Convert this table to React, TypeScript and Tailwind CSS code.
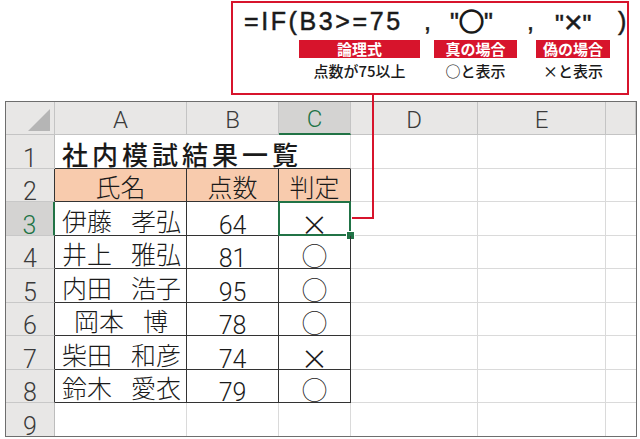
import React from 'react';

const people = [
  { first: '伊藤', last: '孝弘', score: '64', mark: '×' },
  { first: '井上', last: '雅弘', score: '81', mark: '○' },
  { first: '内田', last: '浩子', score: '95', mark: '○' },
  { first: '岡本', last: '博', score: '78', mark: '○', indent: true },
  { first: '柴田', last: '和彦', score: '74', mark: '×' },
  { first: '鈴木', last: '愛衣', score: '79', mark: '○' },
];

const letters = ['A', 'B', 'C', 'D', 'E', ''];

function ColHead({ label, active }: { label: string; active?: boolean }) {
  if (active) {
    return (
      <div className="flex items-center justify-center pt-[3px] bg-[#d4d3d2] border-r border-r-[#c4c4c4] border-b-2 border-b-[#217346] text-[24px] leading-none text-[#217346] font-['Roboto',sans-serif] font-light">
        {label}
      </div>
    );
  }
  return (
    <div className="flex items-center justify-center pt-[3px] bg-[#e8e7e6] border-r border-b border-[#c4c4c4] text-[24px] leading-none text-[#3a3a3a] font-['Roboto',sans-serif] font-light">
      {label}
    </div>
  );
}

function RowHead({ n }: { n: number }) {
  if (n === 3) {
    return (
      <div className="flex items-center justify-center pt-[13px] bg-[#d4d3d2] border-b border-b-[#c8c8c8] border-r-2 border-r-[#217346] text-[25px] leading-none text-[#217346] font-['Roboto',sans-serif] font-light">
        {n}
      </div>
    );
  }
  const inTable = n >= 2 && n <= 8;
  return (
    <div
      className={
        inTable
          ? "flex items-center justify-center pt-[13px] bg-[#e8e7e6] border-b border-b-[#c8c8c8] border-r border-r-[#333] text-[25px] leading-none text-[#3a3a3a] font-['Roboto',sans-serif] font-light"
          : "flex items-center justify-center pt-[13px] bg-[#e8e7e6] border-b border-b-[#c8c8c8] border-r border-r-[#bdbdbd] text-[25px] leading-none text-[#3a3a3a] font-['Roboto',sans-serif] font-light"
      }
    >
      {n}
    </div>
  );
}

function Blank({ last }: { last?: boolean }) {
  return <div className={last ? 'border-b border-[#dadada]' : 'border-r border-b border-[#dadada]'} />;
}

function Blank9({ last }: { last?: boolean }) {
  return <div className={last ? '' : 'border-r border-[#dadada]'} />;
}

export default function App() {
  return (
    <div className="relative w-[640px] h-[439px] overflow-hidden bg-white text-[#1a1a1a]">
      {/* formula callout */}
      <div className="ml-[231px] pt-[1px]">
        <div className="box-border w-[398px] h-[94px] border-2 border-[#d7142c] pl-[11px] font-['Liberation_Sans','Noto_Sans_CJK_JP',sans-serif]">
          <div className="mt-[6px] flex h-[25px] items-center whitespace-nowrap text-[25px] leading-none [-webkit-text-stroke:0.5px_#1a1a1a]">
            <span className="w-[170px] tracking-[2.6px]">=IF(B3&gt;=75</span>
            <span className="w-[30px] pl-[10px]">,</span>
            <span className="w-[61px] pl-[6px]">
              "<span className="font-['Noto_Sans_CJK_JP',sans-serif] text-[25px] [-webkit-text-stroke:1.6px_#1a1a1a]">○</span>"
            </span>
            <span className="w-[45px] pl-[22px]">,</span>
            <span className="w-[62px] pl-[5px]">
              "<span className="text-[32px]">×</span>"
            </span>
            <span className="pl-[6px]">)</span>
          </div>
          <div className="mt-[6px] ml-[55px] flex font-['Noto_Sans_CJK_JP',sans-serif]">
            <div className="flex w-[121px] flex-col items-center">
              <div className="h-[18px] w-full bg-[#d7142c] text-center text-[15px] font-bold leading-[18px] text-white">論理式</div>
              <div className="mt-[4px] whitespace-nowrap text-[15px] font-medium leading-[18px]">点数が75以上</div>
            </div>
            <div className="ml-[14px] flex w-[83px] flex-col items-center">
              <div className="h-[18px] w-full bg-[#d7142c] text-center text-[15px] font-bold leading-[18px] text-white">真の場合</div>
              <div className="mt-[4px] whitespace-nowrap text-[15px] font-medium leading-[18px]">○と表示</div>
            </div>
            <div className="ml-[19px] flex w-[74px] flex-col items-center">
              <div className="h-[18px] w-full bg-[#d7142c] text-center text-[15px] font-bold leading-[18px] text-white">偽の場合</div>
              <div className="mt-[4px] whitespace-nowrap text-[15px] font-medium leading-[18px]">×と表示</div>
            </div>
          </div>
        </div>
      </div>

      {/* spreadsheet */}
      <div className="mt-[6px] ml-[5px] box-border grid h-[336px] w-[632px] grid-cols-[49px_132px_92px_72px_127px_128px_30px] grid-rows-[33px_34px_33px_34px_33px_34px_33px_34px_33px_33px] border border-[#6e6e6e] font-['Noto_Sans_CJK_JP',sans-serif]">
        {/* header row */}
        <div className="relative bg-[#e8e7e6] border-r border-b border-[#c4c4c4]">
          <svg className="absolute right-[4px] bottom-[3px]" width="22" height="22" viewBox="0 0 22 22">
            <polygon points="22,0 22,22 0,22" fill="#b5b5b5" />
          </svg>
        </div>
        {letters.map((l, i) => (
          <ColHead key={i} label={l} active={l === 'C'} />
        ))}

        {/* row 1 */}
        <RowHead n={1} />
        <div className="relative z-10 flex items-center pl-[7px] pt-[5px] border-b border-b-[#333] whitespace-nowrap text-[26px] font-medium leading-none tracking-[4px]">
          社内模試結果一覧
        </div>
        <div className="border-b border-b-[#333]" />
        <div className="border-r border-b border-r-[#dadada] border-b-[#333]" />
        <Blank />
        <Blank />
        <Blank last />

        {/* row 2 */}
        <RowHead n={2} />
        <div className="flex items-center justify-center pt-[2px] bg-[#f8cbad] border-r border-b border-[#333] text-[25px] leading-none font-light">氏名</div>
        <div className="flex items-center justify-center pt-[2px] bg-[#f8cbad] border-r border-b border-[#333] text-[25px] leading-none font-light">点数</div>
        <div className="flex items-center justify-center pt-[2px] bg-[#f8cbad] border-r border-b border-[#333] text-[25px] leading-none font-light">判定</div>
        <Blank />
        <Blank />
        <Blank last />

        {/* rows 3-8 */}
        {people.map((p, i) => (
          <React.Fragment key={p.first}>
            <RowHead n={i + 3} />
            <div
              className={
                p.indent
                  ? 'flex items-center pl-[19px] pt-[3px] border-r border-b border-[#333] whitespace-nowrap text-[25px] leading-none font-light'
                  : 'flex items-center pl-[7px] pt-[3px] border-r border-b border-[#333] whitespace-nowrap text-[25px] leading-none font-light'
              }
            >
              <span>
                {p.first}
                <span className="tracking-[-6px]">　</span>
                {p.last}
              </span>
            </div>
            <div className="flex items-center justify-center pt-[13px] border-r border-b border-[#333] text-[25px] leading-none font-['Roboto',sans-serif] font-light">
              {p.score}
            </div>
            <div className="relative flex items-center justify-center border-r border-b border-[#333]">
              {p.mark === '×' ? (
                <span className="pt-[8px] text-[42px] leading-[16px] text-[#1a1a1a] font-['Lato',sans-serif] font-light">×</span>
              ) : (
                <span className="pt-[6px] text-[26px] leading-[20px] font-thin">○</span>
              )}
              {i === 0 && (
                <>
                  <div className="pointer-events-none absolute -top-[1px] -left-[1px] -right-[1px] -bottom-[1px] border-2 border-[#217346]" />
                  <div className="absolute -right-[4px] -bottom-[4px] h-[7px] w-[7px] bg-[#217346] outline outline-1 outline-white" />
                </>
              )}
            </div>
            <Blank />
            <Blank />
            <Blank last />
          </React.Fragment>
        ))}

        {/* row 9 */}
        <div className="flex items-center justify-center pt-[13px] bg-[#e8e7e6] border-r border-r-[#bdbdbd] text-[25px] leading-none text-[#3a3a3a] font-['Roboto',sans-serif] font-light">
          9
        </div>
        <Blank9 />
        <Blank9 />
        <Blank9 />
        <Blank9 />
        <Blank9 />
        <Blank9 last />
      </div>

      {/* connector line from callout to C3 */}
      <svg className="pointer-events-none absolute inset-0 z-20" width="640" height="439">
        <polyline points="373,95 373,218 352,218" fill="none" stroke="#d7142c" strokeWidth="2" />
      </svg>
    </div>
  );
}
